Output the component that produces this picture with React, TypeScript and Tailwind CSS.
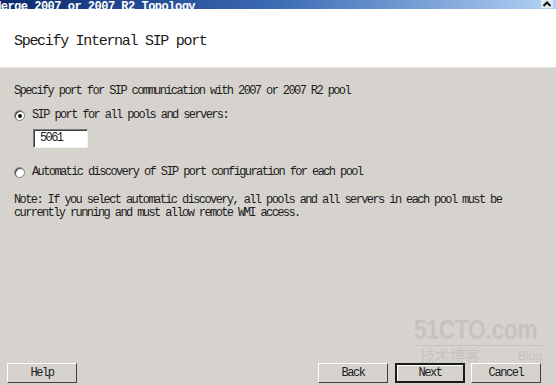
export default function App() {
  const mono = { fontFamily: '"Liberation Mono", "DejaVu Sans Mono", monospace' }

  return (
    <div
      className="relative flex h-[385px] w-[556px] flex-col overflow-hidden bg-[#d6d3ce] text-[#1c1c1c]"
      style={mono}
    >
      {/* Title bar (cut off at the top) */}
      <div className="flex h-[9px] shrink-0 items-end overflow-hidden bg-gradient-to-r from-[#0b2a70] via-[#3d6cb4] to-[#b4d2f4]">
        <span className="-ml-[6px] mb-[-4px] whitespace-nowrap text-[12px] font-bold leading-none tracking-[-0.5px] text-white">
          Merge 2007 or 2007 R2 Topology
        </span>
        <div className="flex-1" />
        <div className="mb-[1px] mr-[3px] flex h-[8px] w-[12px] shrink-0 items-center justify-center bg-[#dfe9f6]">
          <svg width="10" height="6" viewBox="0 0 10 6">
            <path d="M1.5 5 L5 1.5 L8.5 5" stroke="#111" strokeWidth="2" fill="none" />
          </svg>
        </div>
      </div>

      {/* Header */}
      <div className="h-[59px] shrink-0 border-b border-[#e4e1dc] bg-white pl-[14px] pt-[24px]">
        <div className="text-[15px] leading-[18px] tracking-[-1.3px] text-[#1a1a1a]">
          Specify Internal SIP port
        </div>
      </div>

      {/* Body */}
      <div className="flex flex-1 flex-col px-[14px] pt-[17px] text-[12px] leading-[13px] tracking-[-1.6px]">
        <div>Specify port for SIP communication with 2007 or 2007 R2 pool</div>

        <label className="mt-[11px] flex items-center">
          <span className="flex h-[11px] w-[11px] items-center justify-center rounded-full border border-[#808080] bg-white shadow-[inset_1px_1px_0_#404040]">
            <span className="h-[4px] w-[4px] rounded-full bg-[#111]" />
          </span>
          <span className="ml-[7px]">SIP port for all pools and servers:</span>
        </label>

        <div className="ml-[19px] mt-[7px] flex h-[19px] w-[55px] items-center border border-[#7a7a7a] border-b-[#f2f2f2] border-r-[#f2f2f2] bg-white pl-[6px] shadow-[inset_1px_1px_0_#404040]">
          5061
        </div>

        <label className="mt-[18px] flex items-center">
          <span className="h-[11px] w-[11px] rounded-full border border-[#808080] bg-white shadow-[inset_1px_1px_0_#404040]" />
          <span className="ml-[7px]">Automatic discovery of SIP port configuration for each pool</span>
        </label>

        <div className="mt-[15px]">
          Note: If you select automatic discovery, all pools and all servers in each pool must be
          <br />
          currently running and must allow remote WMI access.
        </div>
      </div>

      {/* Buttons */}
      <div className="flex h-[22px] shrink-0 items-start pl-[7px] pr-[15px] text-[12px] tracking-[-1.4px]">
        <button className="h-[20px] w-[70px] border border-[#ffffff] border-b-[#404040] border-r-[#404040] bg-[#d6d3ce] leading-none">
          Help
        </button>
        <div className="flex-1" />
        <button className="h-[20px] w-[70px] border border-[#ffffff] border-b-[#404040] border-r-[#404040] bg-[#d6d3ce] leading-none">
          Back
        </button>
        <button className="ml-[7px] h-[20px] w-[70px] border-2 border-[#1a1a1a] bg-[#d6d3ce] leading-none shadow-[inset_1px_1px_0_#ffffff]">
          Next
        </button>
        <button className="ml-[6px] h-[20px] w-[70px] border border-[#ffffff] border-b-[#404040] border-r-[#404040] bg-[#d6d3ce] leading-none">
          Cancel
        </button>
      </div>

      {/* Watermark */}
      <div className="pointer-events-none absolute left-[414px] top-[317px] flex w-[128px] flex-col text-[#c6c3bd]">
        <span
          className="origin-left scale-x-[0.85] whitespace-nowrap text-[27px] font-bold leading-none tracking-[-0.5px]"
          style={{ fontFamily: '"Liberation Sans", sans-serif' }}
        >
          51CTO.com
        </span>
        <div className="mt-[1px] flex items-end justify-between border-t border-[#c6c3bd] pl-[6px] pt-[1px]">
          <span className="text-[15px] leading-none" style={{ fontFamily: '"Noto Sans CJK SC", sans-serif' }}>
            技术博客
          </span>
          <span className="text-[12px] leading-none" style={{ fontFamily: '"Liberation Sans", sans-serif' }}>
            Blog
          </span>
        </div>
      </div>
    </div>
  )
}
